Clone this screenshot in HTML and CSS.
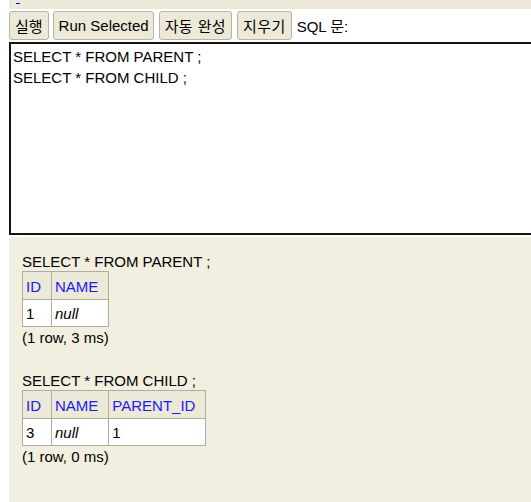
FILE: index.html
```html
<!DOCTYPE html>
<html>
<head>
<meta charset="utf-8">
<link rel="stylesheet" href="styles.css">
</head>
<body>
<div class="page">
  <div class="topbar"><span class="dash"></span></div>
  <div class="toolbar">
    <button class="btn">실행</button>
    <button class="btn en">Run Selected</button>
    <button class="btn ko">자동 완성</button>
    <button class="btn ko">지우기</button>
    <span class="label">SQL 문:</span>
  </div>
  <div class="editor">SELECT * FROM PARENT ;
SELECT * FROM CHILD ;</div>
  <div class="results">
    <div class="query">
      <div class="sql">SELECT * FROM PARENT ;</div>
      <table class="grid">
        <tr><th>ID</th><th>NAME</th></tr>
        <tr><td>1</td><td><i>null</i></td></tr>
      </table>
      <div class="status">(1 row, 3 ms)</div>
    </div>
    <div class="query">
      <div class="sql">SELECT * FROM CHILD ;</div>
      <table class="grid">
        <tr><th>ID</th><th>NAME</th><th>PARENT_ID</th></tr>
        <tr><td>3</td><td><i>null</i></td><td>1</td></tr>
      </table>
      <div class="status">(1 row, 0 ms)</div>
    </div>
  </div>
</div>
</body>
</html>
```
FILE: styles.css
```css
html, body {
  margin: 0;
  padding: 0;
  background: #ffffff;
  overflow: hidden;
}
.page {
  width: 531px;
  height: 502px;
  overflow: hidden;
  font-family: "Liberation Sans", Arial, "Noto Sans CJK KR", sans-serif;
  font-size: 15px;
  color: #000;
  display: flex;
  flex-direction: column;
}
.topbar {
  margin-left: 9px;
  height: 9px;
  background: #ece9d8;
  position: relative;
  flex: none;
}
.dash {
  position: absolute;
  left: 7px;
  top: 3px;
  width: 4px;
  height: 1px;
  background: #0000ee;
}
.toolbar {
  display: flex;
  align-items: center;
  padding-left: 9px;
  margin-top: 2px;
  height: 29px;
  flex: none;
}
.btn {
  font-family: "Liberation Sans", Arial, "Noto Sans CJK KR", sans-serif;
  font-size: 15px;
  color: #000;
  height: 29px;
  padding: 0 5px;
  margin: 0 5px 0 0;
  background: #ece9d8;
  border: 1px solid #b5b2a6;
  border-radius: 3px;
}
.btn.ko { letter-spacing: 0.4px; }
.btn.en { padding: 0 4px 0 5px; }
.btn:first-child { margin-right: 4px; }
.label {
  white-space: nowrap;
}
.editor {
  margin-top: 2px;
  margin-left: 9px;
  width: 560px;
  height: 185px;
  flex: none;
  border: 2px solid #141414;
  padding: 2px 2px;
  line-height: 21px;
  white-space: pre;
  background: #fff;
}
.results {
  margin-top: 2px;
  margin-left: 9px;
  flex: 1;
  background: #f2efe0;
  padding: 16px 13px 0;
}
.query {
  margin-bottom: 26px;
}
.sql, .status {
  line-height: 17px;
}
.status {
  margin-top: 2px;
}
.grid {
  border-collapse: collapse;
  margin-top: 1px;
}
.grid th, .grid td {
  border: 1px solid #b0ac9e;
  text-align: left;
  font-weight: normal;
  line-height: 17px;
  padding: 6px 10px 4px 3px;
}
.grid th {
  background: #ece9d8;
  color: #1a1aee;
}
.grid td {
  background: #fff;
  padding: 5px 10px 4px 3px;
}
```
